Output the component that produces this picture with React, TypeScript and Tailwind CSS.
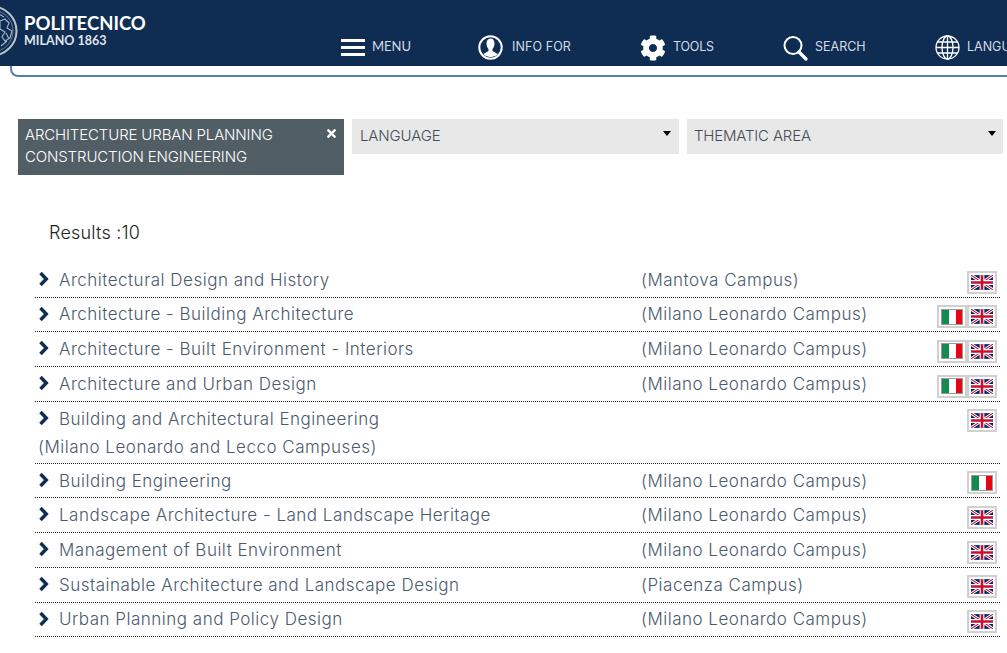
import React from "react";
import { FaTimes, FaCog } from "react-icons/fa";

const UK = () => (
  <svg width="22" height="15" viewBox="0 0 60 40" className="block">
    <rect width="60" height="40" fill="#012169" />
    <path d="M0 0L60 40M60 0L0 40" stroke="#fff" strokeWidth="8" />
    <path d="M0 0L60 40M60 0L0 40" stroke="#c8102e" strokeWidth="3" />
    <path d="M30 0V40M0 20H60" stroke="#fff" strokeWidth="13" />
    <path d="M30 0V40M0 20H60" stroke="#c8102e" strokeWidth="7" />
  </svg>
);
const IT = () => (
  <svg width="22" height="16" viewBox="0 0 22 16" className="block">
    <rect width="22" height="16" fill="#999" />
    <rect x="1" y="1" width="7" height="14" fill="#138a4f" />
    <rect x="8" y="1" width="7" height="14" fill="#fff" />
    <rect x="15" y="1" width="6" height="14" fill="#e30613" />
  </svg>
);
const Flag = ({ kind }: { kind: "uk" | "it" }) => (
  <span className="w-[30px] h-[23px] border-2 border-[#d0d0d0] flex items-center justify-center bg-white shrink-0">
    {kind === "uk" ? <UK /> : <IT />}
  </span>
);

const rows: { name: string; campus: string; flags: ("uk" | "it")[]; sub?: string }[] = [
  { name: "Architectural Design and History", campus: "(Mantova Campus)", flags: ["uk"] },
  { name: "Architecture - Building Architecture", campus: "(Milano Leonardo Campus)", flags: ["it", "uk"] },
  { name: "Architecture - Built Environment - Interiors", campus: "(Milano Leonardo Campus)", flags: ["it", "uk"] },
  { name: "Architecture and Urban Design", campus: "(Milano Leonardo Campus)", flags: ["it", "uk"] },
  { name: "Building and Architectural Engineering", sub: "(Milano Leonardo and Lecco Campuses)", campus: "", flags: ["uk"] },
  { name: "Building Engineering", campus: "(Milano Leonardo Campus)", flags: ["it"] },
  { name: "Landscape Architecture - Land Landscape Heritage", campus: "(Milano Leonardo Campus)", flags: ["uk"] },
  { name: "Management of Built Environment", campus: "(Milano Leonardo Campus)", flags: ["uk"] },
  { name: "Sustainable Architecture and Landscape Design", campus: "(Piacenza Campus)", flags: ["uk"] },
  { name: "Urban Planning and Policy Design", campus: "(Milano Leonardo Campus)", flags: ["uk"] },
];

const Caret = () => (
  <span className="w-0 h-0 border-x-[4px] border-x-transparent border-t-[5px] border-t-black" />
);

const Chevron = () => (
  <svg width="12" height="16" viewBox="0 0 12 16" className="shrink-0 ml-[3px] -mt-[3px]">
    <path d="M2.500 2L8.300 8L2.500 14" fill="none" stroke="#0f2d53" strokeWidth="3.400" />
  </svg>
);

const Seal = () => (
  <svg width="24" height="60" viewBox="0 0 24 60" className="block shrink-0">
    <circle cx="-8" cy="31" r="24.500" fill="none" stroke="#b9c3cf" strokeWidth="2" />
    <circle cx="-8" cy="31" r="21" fill="none" stroke="#7f90a6" strokeWidth="0.800" />
    <path d="M0 21l5-2 4 4-2 5 5 3-2 7-5 3-3-4 3-5-5-3zM-1 14l5 3M1 46l6-5M6 33l3 6" fill="none" stroke="#aab5c3" strokeWidth="1.100" />
  </svg>
);

const Nav = ({ icon, label, className, labelClass }: { icon: React.ReactNode; label: string; className: string; labelClass?: string }) => (
  <div className={"flex items-center shrink-0 " + className}>
    {icon}
    <span className={"text-[12.5px] text-[#d5dbe3] whitespace-nowrap " + (labelClass ?? "")}>{label}</span>
  </div>
);

export default function App() {
  return (
    <div className="w-[1007px] h-[653px] overflow-hidden bg-white font-['Inter','Liberation_Sans',sans-serif]">
      <header className="h-[66px] bg-[#0f2d53] flex overflow-hidden">
        <Seal />
        <div className="font-['Lato',sans-serif] text-white shrink-0 pt-[13px] w-[123px]">
          <div className="text-[18.5px] leading-[20px] font-bold">POLITECNICO</div>
          <div className="text-[12.500px] leading-[14px] font-bold text-[#dfe4ea] mt-[1px]">MILANO 1863</div>
        </div>
        <div className="flex items-center self-start mt-[35px] h-[25px]">
          <Nav
            className="ml-[194px] w-[70px]"
            labelClass="font-['Lato',sans-serif] text-[13px] ml-[7px] mb-[1px]"
            label="MENU"
            icon={
              <span className="w-[25px] flex flex-col gap-[4px]">
                <span className="h-[3px] bg-white" />
                <span className="h-[3px] bg-white" />
                <span className="h-[3px] bg-white" />
              </span>
            }
          />
          <Nav
            className="ml-[67px] w-[95px]"
            labelClass="ml-[9px] tracking-[0.1px]"
            label="INFO FOR"
            icon={
              <svg width="25" height="25" viewBox="0 0 25 25" className="shrink-0">
                <circle cx="12.500" cy="12.500" r="11.200" fill="none" stroke="#fff" strokeWidth="2" />
                <path d="M12.500 3.500c-2.600 0-4 2.200-4 5 0 2.500 1 4.400 2 5.600v2l-5.500 3.200a11 11 0 0 0 15 0L14.500 16v-2c1-1.200 2-3.100 2-5.600 0-2.800-1.400-4.900-4-4.900z" fill="#fff" />
              </svg>
            }
          />
          <Nav
            className="ml-[67px] w-[75px]"
            labelClass="ml-[7px] tracking-[-0.2px]"
            label="TOOLS"
            icon={<FaCog className="w-[26px] h-[26px] text-white shrink-0" />}
          />
          <Nav
            className="ml-[68px] w-[84px]"
            labelClass="ml-[7px]"
            label="SEARCH"
            icon={
              <svg width="25" height="26" viewBox="0 0 25 26" className="shrink-0">
                <circle cx="10" cy="10.500" r="8.500" fill="none" stroke="#fff" strokeWidth="2" />
                <path d="M16 17l7 7" stroke="#fff" strokeWidth="3.200" strokeLinecap="round" />
              </svg>
            }
          />
          <Nav
            className="ml-[68px]"
            labelClass="ml-[7px]"
            label="LANGUAGE"
            icon={
              <svg width="25" height="25" viewBox="0 0 25 25" className="shrink-0" fill="none" stroke="#fff" strokeWidth="1.300">
                <circle cx="12.500" cy="12.500" r="11.500" />
                <ellipse cx="12.500" cy="12.500" rx="5.500" ry="11.500" />
                <path d="M12.500 1v23M1 12.500h23M2.500 7h20M2.500 18h20" />
              </svg>
            }
          />
        </div>
      </header>

      <div className="ml-[10px] h-[11px] border-l-2 border-b-2 border-[#5a7db5] rounded-bl-[8px]" />

      <div className="flex items-start gap-2 ml-[18px] mt-[42px]">
        <div className="w-[326px] h-[56px] bg-[#525e66] text-white text-[15px] leading-[22px] font-light pl-[7px] pr-[7px] pt-[5px] flex justify-between">
          <span className="tracking-[-0.14px]">ARCHITECTURE URBAN PLANNING<br />CONSTRUCTION ENGINEERING</span>
          <FaTimes className="w-[11px] h-[13px] mt-[3px] text-white shrink-0" />
        </div>
        <div className="w-[327px] h-[35px] bg-[#e8e8e8] text-[#444c55] text-[15px] font-light pl-[8px] pr-[8px] flex items-center justify-between">
          <span className="tracking-[-0.14px]">LANGUAGE</span>
          <span className="-mt-[6px] flex"><Caret /></span>
        </div>
        <div className="w-[316px] h-[35px] bg-[#e8e8e8] text-[#444c55] text-[15px] font-light pl-[7px] pr-[7px] flex items-center justify-between">
          <span className="tracking-[-0.18px]">THEMATIC AREA</span>
          <span className="-mt-[6px] flex"><Caret /></span>
        </div>
      </div>

      <div className="ml-[49px] mt-[46px] h-[24px] text-[18px] leading-[24px] font-light text-[#222] tracking-[0.2px]">Results :10</div>

      <div className="ml-[35px] w-[965px] mt-[18px] text-[#4a5a6e] text-[17px] font-light tracking-[0.5px]">
        {rows.map((r) => (
          <div key={r.name} className={"border-b border-dotted border-[#222] " + (r.sub ? "h-[62px]" : "h-[34.700px]")}>
            <div className="h-[34px] flex items-center pt-[1px]">
              <Chevron />
              <span className="ml-[9px] w-[582px] shrink-0 whitespace-nowrap">{r.name}</span>
              <span className="whitespace-nowrap">{r.campus}</span>
              <span className="ml-auto flex mr-[3px] mt-[3px]">
                {r.flags.map((f) => <Flag key={f} kind={f} />)}
              </span>
            </div>
            {r.sub && <div className="ml-[3px] -mt-[3px] leading-[28px] whitespace-nowrap">{r.sub}</div>}
          </div>
        ))}
      </div>
    </div>
  );
}
